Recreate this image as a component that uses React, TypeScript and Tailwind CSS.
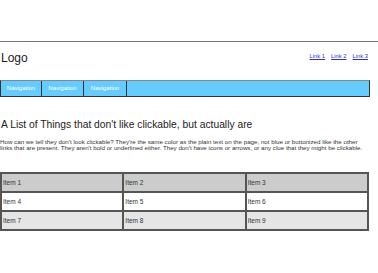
const items = [
  ['Item 1', 'Item 2', 'Item 3'],
  ['Item 4', 'Item 5', 'Item 6'],
  ['Item 7', 'Item 8', 'Item 9'],
];

const rowBg = ['bg-[#cccccc]', 'bg-white', 'bg-[#e5e5e5]'];

export default function App() {
  return (
    <div className="w-[378px] h-[273px] bg-white overflow-hidden font-['Liberation_Sans',Arial,sans-serif] text-[#222]">
      <div className="h-[41px]" />
      <div className="border-t border-[#777]" />

      {/* header */}
      <div className="flex items-center justify-between h-[30px] pr-[10px]">
        <div className="text-[12px] leading-none pl-[1px] mt-[2px]">Logo</div>
        <div className="flex gap-[6px] text-[5.8px] -mt-[2px]">
          <a href="#" className="text-[#3333cc] underline">Link 1</a>
          <a href="#" className="text-[#3333cc] underline">Link 2</a>
          <a href="#" className="text-[#3333cc] underline">Link 3</a>
        </div>
      </div>

      {/* navigation */}
      <div className="mt-[8px] mr-[8px] flex h-[17px] bg-[#66ccff] border border-[#333] border-t-[#888]">
        <a href="#" className="w-[41px] flex items-center justify-center text-white text-[6px] border-r border-[#333]">Navigation</a>
        <a href="#" className="w-[42px] flex items-center justify-center text-white text-[6px] border-r border-[#333]">Navigation</a>
        <a href="#" className="w-[43px] flex items-center justify-center text-white text-[6px] border-r border-[#333]">Navigation</a>
      </div>

      <h1 className="mt-[23px] text-[10.3px] leading-none pl-[1px]">A List of Things that don't like clickable, but actually are</h1>
      <p className="mt-[9px] text-[6.2px] leading-[6px] text-[#333] pr-[12px]">
        How can we tell they don't look clickable? They're the same color as the plain text on the page, not blue or buttonized like the other links that are present. They aren't bold or underlined either. They don't have icons or arrows, or any clue that they might be clickable.
      </p>

      {/* table */}
      <table className="mt-[21px] w-[369px] border-collapse border-2 border-[#555] text-[6.5px] text-[#333]">
        <tbody>
          {items.map((row, i) => (
            <tr key={i} className={`${rowBg[i]} h-[19px]`}>
              {row.map((cell) => (
                <td key={cell} className="border-2 border-[#555] px-[1px] w-1/3">{cell}</td>
              ))}
            </tr>
          ))}
        </tbody>
      </table>
    </div>
  );
}
